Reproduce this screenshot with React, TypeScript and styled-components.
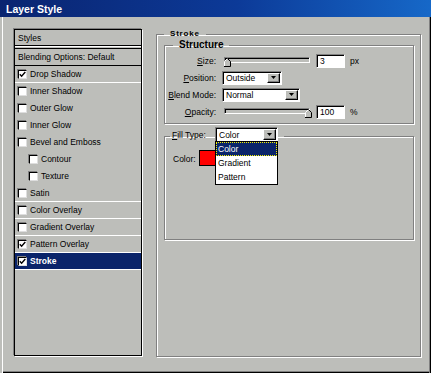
import React from 'react';
import styled, { createGlobalStyle } from 'styled-components';

const FACE = '#bdbeba';
const NAVY = '#0a246a';

const GlobalStyle = createGlobalStyle`
  html, body {
    margin: 0;
    padding: 0;
    background: ${FACE};
  }
  body {
    font-family: 'Liberation Sans', Arial, sans-serif;
    font-size: 8px;
    color: #000;
  }
  * {
    box-sizing: border-box;
  }
`;

const Window = styled.div`
  width: 431px;
  height: 373px;
  display: flex;
  flex-direction: column;
  background: ${FACE};
  overflow: hidden;
`;

const TitleBar = styled.div`
  height: 17px;
  flex: none;
  display: flex;
  align-items: center;
  padding-left: 6px;
  background: linear-gradient(90deg, #0a2470 0%, #0c3a98 55%, #1668c8 100%);
  color: #fff;
  font-weight: bold;
  font-size: 10.5px;
`;

const Frame = styled.div`
  flex: 1;
  display: flex;
  align-items: flex-start;
  gap: 14px;
  padding: 12px 0 0 14px;
  box-shadow: inset 2px 0 0 ${FACE}, inset 3px 0 0 #fff, inset -1px 0 0 #000,
    inset -2px 0 0 #808080, inset 0 -1px 0 #000, inset 0 -2px 0 #808080;
`;

/* ---------- style list ---------- */

const StyleList = styled.div`
  width: 128px;
  height: 327px;
  flex: none;
  border: 1px solid #000;
  box-shadow: -1px -1px 0 #808080, 1px 1px 0 #fff;
  display: flex;
  flex-direction: column;
  font-size: 8.5px;
`;

const ListHeader = styled.div`
  height: 16px;
  display: flex;
  align-items: center;
  padding-left: 3px;
  border-bottom: 1px solid #000;
  box-shadow: 0 1px 0 #fff;
  margin-bottom: 2px;
`;

const BlendRow = styled.div`
  height: 18px;
  display: flex;
  align-items: center;
  padding-left: 3px;
  border-top: 1px solid #000;
  border-bottom: 1px solid #000;
`;

const StyleRow = styled.div<{ $indent?: boolean; $selected?: boolean; $line?: boolean }>`
  height: 17px;
  display: flex;
  align-items: center;
  gap: 3px;
  padding-left: ${(p) => (p.$indent ? 14 : 3)}px;
  border-bottom: 1px solid ${(p) => (p.$line ? '#fff' : 'transparent')};
  background: ${(p) => (p.$selected ? NAVY : 'transparent')};
  color: ${(p) => (p.$selected ? '#fff' : '#000')};
  font-weight: ${(p) => (p.$selected ? 'bold' : 'normal')};
`;

const CheckBox = styled.span`
  width: 9px;
  height: 9px;
  flex: none;
  background: #fff;
  border-top: 1px solid #000;
  border-left: 1px solid #000;
  border-right: 1px solid #dedede;
  border-bottom: 1px solid #dedede;
  box-shadow: -1px -1px 0 #808080;
  display: flex;
  align-items: center;
  justify-content: center;
`;

const Check = () => (
  <svg width="7" height="7" viewBox="0 0 7 7">
    <path d="M0.8 3.2 L2.6 5.2 L6.3 1" fill="none" stroke="#000" strokeWidth="1.4" />
  </svg>
);

/* ---------- group boxes ---------- */

const Group = styled.fieldset<{ $height?: number }>`
  margin: 0;
  padding: 0;
  min-width: 0;
  border: 1px solid #808080;
  box-shadow: inset 1px 1px 0 #fff, 1px 1px 0 #fff;
  ${(p) => (p.$height ? `height: ${p.$height}px;` : '')}
`;

const StrokeGroup = styled(Group)`
  width: 265px;
  flex: none;
`;

const SmallLegend = styled.legend`
  margin-left: 7px;
  padding: 0 6px;
  font-size: 8px;
  line-height: 10px;
  font-weight: bold;
  letter-spacing: 0.8px;
`;

const BigLegend = styled.legend`
  margin-left: 8px;
  padding: 0 6px;
  font-size: 10px;
  line-height: 12px;
  font-weight: bold;
`;

const FillLegend = styled.legend`
  margin-left: 5px;
  padding: 0 6px 3px 2px;
  display: flex;
  align-items: center;
`;

const GroupBody = styled.div`
  padding: 0 6px 0 7px;
`;

const StructureBody = styled.div`
  padding: 2px 0 4px 2px;
  display: flex;
  flex-direction: column;
  gap: 2px;
`;

const FormRow = styled.div`
  height: 15px;
  display: flex;
  align-items: center;
`;

const Label = styled.span`
  width: 49px;
  margin-right: 6px;
  text-align: right;
  font-size: 8.5px;
  white-space: nowrap;
`;

const Key = styled.span`
  text-decoration: underline;
`;

const Unit = styled.span`
  margin-left: 5px;
  font-size: 8.5px;
`;

/* ---------- controls ---------- */

const SliderWrap = styled.div`
  position: relative;
  width: 90px;
  height: 15px;
  flex: none;
`;

const Track = styled.div`
  margin: 4px 2px 0;
  height: 6px;
  border: 1px solid;
  border-color: #808080 #fff #fff #808080;
  box-shadow: inset 1px 1px 0 #000;
`;

const Thumb = styled.svg`
  position: absolute;
  top: 5px;
`;

const Slider = ({ value }: { value: number }) => (
  <SliderWrap>
    <Track />
    <Thumb width="7" height="9" viewBox="0 0 7 9" style={{ left: Math.round(1 + value * 82) }}>
      <polygon points="0.5,3.5 3.5,0.5 6.5,3.5 6.5,8.5 0.5,8.5" fill={FACE} />
      <polyline points="0.5,8 0.5,3.5 3.5,0.5" fill="none" stroke="#fff" />
      <polyline points="3.5,0.5 6.5,3.5 6.5,8.5 0,8.5" fill="none" stroke="#000" />
    </Thumb>
  </SliderWrap>
);

const TextBox = styled.div`
  width: 29px;
  height: 14px;
  margin-left: 4px;
  background: #fff;
  border: 1px solid;
  border-color: #808080 #fff #fff #808080;
  box-shadow: inset 1px 1px 0 #000;
  display: flex;
  align-items: center;
  padding-left: 3px;
  font-size: 8.5px;
`;

const SelectBox = styled.div<{ $width: number; $height?: number }>`
  position: relative;
  width: ${(p) => p.$width}px;
  height: ${(p) => p.$height ?? 14}px;
  flex: none;
  background: #fff;
  border: 1px solid;
  border-color: #808080 #fff #fff #808080;
  box-shadow: inset 1px 1px 0 #000;
  display: flex;
  align-items: center;
  padding: 1px 1px 1px 3px;
  font-size: 8.5px;
  font-weight: normal;
`;

const SelectText = styled.span`
  flex: 1;
`;

const SelectButton = styled.span`
  width: 13px;
  height: 100%;
  flex: none;
  background: ${FACE};
  border: 1px solid;
  border-color: #fff #000 #000 #fff;
  box-shadow: inset -1px -1px 0 #808080;
  display: flex;
  align-items: center;
  justify-content: center;
`;

const Arrow = () => (
  <svg width="5" height="3" viewBox="0 0 5 3">
    <polygon points="0,0 5,0 2.5,3" fill="#000" />
  </svg>
);

const OptionList = styled.div`
  position: absolute;
  top: 100%;
  left: -1px;
  right: -1px;
  z-index: 2;
  background: #fff;
  border: 1px solid #000;
`;

const Option = styled.div<{ $selected?: boolean }>`
  height: 14px;
  display: flex;
  align-items: center;
  padding-left: 2px;
  font-size: 8.5px;
  background: ${(p) => (p.$selected ? NAVY : '#fff')};
  color: ${(p) => (p.$selected ? '#fff' : '#000')};
  outline: ${(p) => (p.$selected ? '1px dotted #f4f000' : 'none')};
  outline-offset: -1px;
`;

const Select = ({
  value,
  width,
  height,
  options,
}: {
  value: string;
  width: number;
  height?: number;
  options?: string[];
}) => (
  <SelectBox $width={width} $height={height}>
    <SelectText>{value}</SelectText>
    <SelectButton>
      <Arrow />
    </SelectButton>
    {options && (
      <OptionList>
        {options.map((o) => (
          <Option key={o} $selected={o === value}>
            {o}
          </Option>
        ))}
      </OptionList>
    )}
  </SelectBox>
);

const FillGroup = styled(Group)`
  margin-top: 3px;
`;

const FillLabel = styled.span`
  width: 43px;
  font-size: 8.5px;
  font-weight: normal;
`;

const FillBody = styled.div`
  height: 94px;
  padding: 5px 0 0 8px;
  display: flex;
  align-items: flex-start;
`;

const ColorLabel = styled.span`
  margin-top: 4px;
  margin-right: 3px;
  font-size: 8.5px;
`;

const Swatch = styled.div<{ $color: string }>`
  width: 30px;
  height: 16px;
  background: ${(p) => p.$color};
  border: 1px solid #000;
`;

const styleRows: { name: string; checked?: boolean; indent?: boolean; line?: boolean }[] = [
  { name: 'Drop Shadow', checked: true, line: true },
  { name: 'Inner Shadow' },
  { name: 'Outer Glow' },
  { name: 'Inner Glow' },
  { name: 'Bevel and Emboss' },
  { name: 'Contour', indent: true },
  { name: 'Texture', indent: true },
  { name: 'Satin', line: true },
  { name: 'Color Overlay', line: true },
  { name: 'Gradient Overlay', line: true },
  { name: 'Pattern Overlay', checked: true, line: true },
];

const App = () => {
  return (
    <>
      <GlobalStyle />
      <Window>
        <TitleBar>Layer Style</TitleBar>
        <Frame>
          <StyleList>
            <ListHeader>Styles</ListHeader>
            <BlendRow>Blending Options: Default</BlendRow>
            {styleRows.map((r) => (
              <StyleRow key={r.name} $indent={r.indent} $line={r.line}>
                <CheckBox>{r.checked && <Check />}</CheckBox>
                {r.name}
              </StyleRow>
            ))}
            <StyleRow $selected $line>
              <CheckBox>
                <Check />
              </CheckBox>
              Stroke
            </StyleRow>
          </StyleList>

          <StrokeGroup $height={328}>
            <SmallLegend>Stroke</SmallLegend>
            <GroupBody>
              <Group>
                <BigLegend>Structure</BigLegend>
                <StructureBody>
                  <FormRow>
                    <Label>
                      <Key>S</Key>ize:
                    </Label>
                    <Slider value={0.01} />
                    <TextBox>3</TextBox>
                    <Unit>px</Unit>
                  </FormRow>
                  <FormRow>
                    <Label>
                      <Key>P</Key>osition:
                    </Label>
                    <Select value="Outside" width={60} />
                  </FormRow>
                  <FormRow>
                    <Label>
                      <Key>B</Key>lend Mode:
                    </Label>
                    <Select value="Normal" width={78} />
                  </FormRow>
                  <FormRow>
                    <Label>
                      <Key>O</Key>pacity:
                    </Label>
                    <Slider value={1} />
                    <TextBox>100</TextBox>
                    <Unit>%</Unit>
                  </FormRow>
                </StructureBody>
              </Group>

              <FillGroup>
                <FillLegend>
                  <FillLabel>
                    <Key>F</Key>ill Type:
                  </FillLabel>
                  <Select value="Color" width={63} height={15} options={['Color', 'Gradient', 'Pattern']} />
                </FillLegend>
                <FillBody>
                  <ColorLabel>Color:</ColorLabel>
                  <Swatch $color="#ff0000" />
                </FillBody>
              </FillGroup>
            </GroupBody>
          </StrokeGroup>
        </Frame>
      </Window>
    </>
  );
};

export default App;
